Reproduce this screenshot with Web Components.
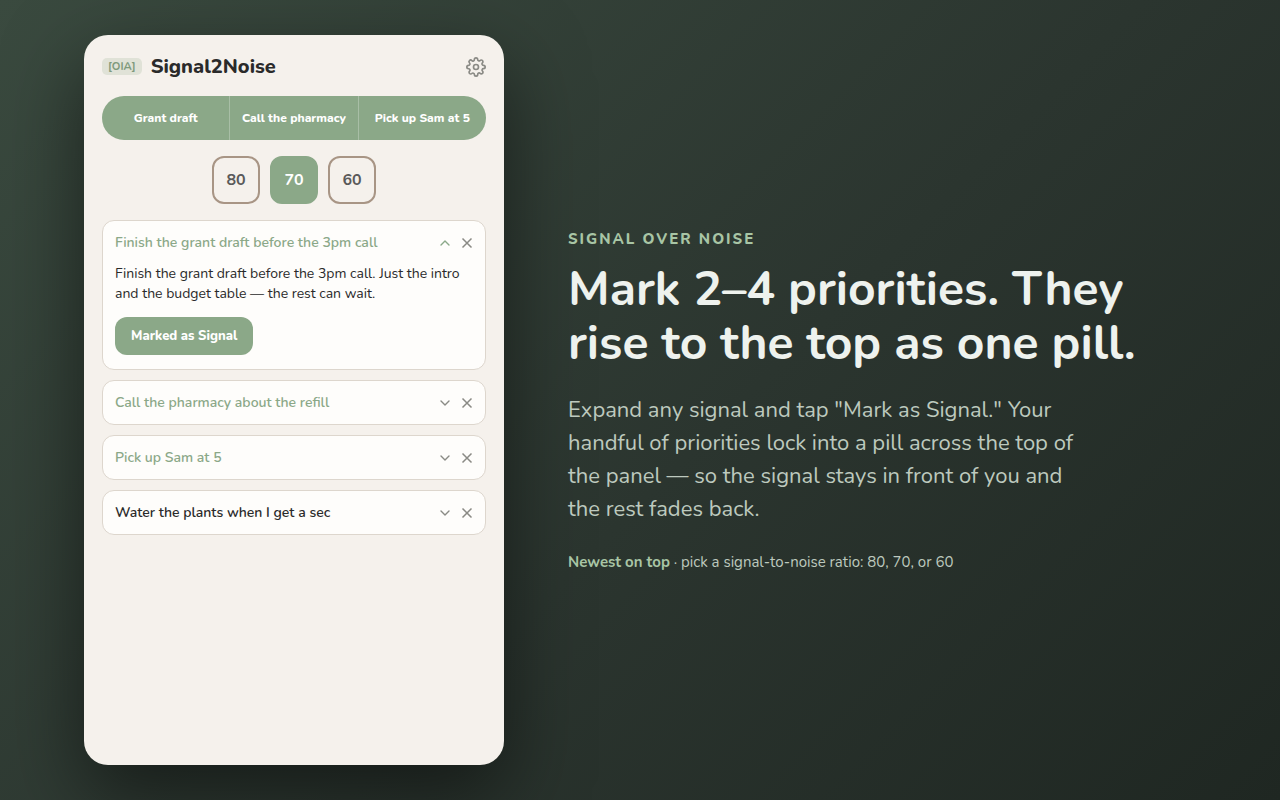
<!DOCTYPE html>
<html lang="en">
<head>
<meta charset="utf-8">
<meta name="viewport" content="width=device-width, initial-scale=1">
<title>Signal2Noise</title>
<style>
  :root {
    --sage: #8ba888;
    --sage-light: #a8c5a5;
    --cream: #f5f1ec;
    --card: #fefdfb;
    --line: #ddd6cd;
    --taupe: #a89585;
    --ink: #2a2a2a;
    --muted: #8a8a85;
  }
  html, body { margin: 0; }
  body { font-family: Nunito, "Nunito Sans", "Open Sans", sans-serif; color: var(--ink); }
</style>
</head>
<body>
<promo-page>
  <signal-panel slot="panel">
    <panel-header slot="header" tag="[OIA]">Signal2Noise</panel-header>
    <priority-pill>
      <span>Grant draft</span><span>Call the pharmacy</span><span>Pick up Sam at 5</span>
    </priority-pill>
    <ratio-picker values="80 70 60" selected="70"></ratio-picker>
    <signal-list>
      <signal-card heading="Finish the grant draft before the 3pm call" marked open>Finish the grant draft before the 3pm call. Just the intro and the budget table — the rest can wait.</signal-card>
      <signal-card heading="Call the pharmacy about the refill" marked></signal-card>
      <signal-card heading="Pick up Sam at 5" marked></signal-card>
      <signal-card heading="Water the plants when I get a sec"></signal-card>
    </signal-list>
  </signal-panel>
  <promo-copy slot="copy">
    <span slot="eyebrow">Signal over noise</span>
    <span slot="headline">Mark 2–4 priorities. They rise to the top as one pill.</span>
    <span slot="lead">Expand any signal and tap "Mark as Signal." Your handful of priorities lock into a pill across the top of the panel — so the signal stays in front of you and the rest fades back.</span>
    <strong slot="note-lead">Newest on top</strong>
    <span slot="note">· pick a signal-to-noise ratio: 80, 70, or 60</span>
  </promo-copy>
</promo-page>

<script>
  class BaseElement extends HTMLElement {
    constructor() {
      super();
      this.attachShadow({ mode: 'open' });
    }
    connectedCallback() {
      this.shadowRoot.innerHTML = this.render();
    }
  }

  customElements.define('promo-page', class extends BaseElement {
    render() {
      return `<style>
        :host {
          display: block;
          background: linear-gradient(135deg, #3a4a3f 0%, #2b352f 55%, #1f2722 100%);
        }
        main {
          box-sizing: border-box;
          min-height: 100vh;
          max-width: 1112px;
          margin: 0 auto;
          padding: 35px 0;
          display: grid;
          grid-template-columns: 420px minmax(0, 1fr);
          gap: 64px;
          align-items: center;
        }
        slot[name=panel] { display: contents; }
        ::slotted([slot=panel]) { align-self: stretch; }
        @media (max-width: 1000px) {
          main { grid-template-columns: minmax(0, 420px); justify-content: center; padding: 24px; }
        }
      </style>
      <main><slot name="panel"></slot><slot name="copy"></slot></main>`;
    }
  });

  customElements.define('signal-panel', class extends BaseElement {
    render() {
      return `<style>
        :host {
          box-sizing: border-box;
          display: flex;
          flex-direction: column;
          gap: 16px;
          padding: 18px;
          border-radius: 24px;
          background: var(--cream);
          box-shadow: 0 30px 80px rgba(0, 0, 0, .5);
        }
      </style>
      <slot name="header"></slot><slot></slot>`;
    }
  });

  customElements.define('panel-header', class extends BaseElement {
    render() {
      return `<style>
        :host { display: flex; align-items: center; gap: 9px; }
        .tag {
          padding: 1px 6px;
          border-radius: 5px;
          background: rgba(139, 168, 136, .2);
          color: #7f9a7c;
          font-size: 11px;
          line-height: 15px;
          font-weight: 700;
        }
        h1 { flex: 1; margin: 0; font-size: 20px; line-height: 27px; font-weight: 800; }
        button { display: flex; padding: 0; border: 0; background: none; color: var(--muted); cursor: pointer; }
      </style>
      <span class="tag">${this.getAttribute('tag')}</span>
      <h1><slot></slot></h1>
      <button type="button" aria-label="Settings">
        <svg width="20" height="20" viewBox="0 0 24 24" fill="none" stroke="currentColor" stroke-width="2" stroke-linecap="round" stroke-linejoin="round">
          <circle cx="12" cy="12" r="3"/>
          <path d="M19.4 15a1.65 1.65 0 0 0 .33 1.82l.06.06a2 2 0 1 1-2.83 2.83l-.06-.06a1.65 1.65 0 0 0-1.82-.33 1.65 1.65 0 0 0-1 1.51V21a2 2 0 0 1-4 0v-.09A1.65 1.65 0 0 0 9 19.4a1.65 1.65 0 0 0-1.82.33l-.06.06a2 2 0 1 1-2.83-2.83l.06-.06a1.65 1.65 0 0 0 .33-1.82 1.65 1.65 0 0 0-1.51-1H3a2 2 0 0 1 0-4h.09A1.65 1.65 0 0 0 4.6 9a1.65 1.65 0 0 0-.33-1.82l-.06-.06a2 2 0 1 1 2.83-2.83l.06.06a1.65 1.65 0 0 0 1.82.33H9a1.65 1.65 0 0 0 1-1.51V3a2 2 0 0 1 4 0v.09a1.65 1.65 0 0 0 1 1.51 1.65 1.65 0 0 0 1.82-.33l.06-.06a2 2 0 1 1 2.83 2.83l-.06.06a1.65 1.65 0 0 0-.33 1.82V9a1.65 1.65 0 0 0 1.51 1H21a2 2 0 0 1 0 4h-.09a1.65 1.65 0 0 0-1.51 1z"/>
        </svg>
      </button>`;
    }
  });

  customElements.define('priority-pill', class extends BaseElement {
    render() {
      return `<style>
        :host {
          display: flex;
          overflow: hidden;
          border-radius: 22px;
          background: var(--sage);
          color: #fff;
          font-size: 12px;
          line-height: 16px;
          font-weight: 800;
        }
        ::slotted(span) {
          flex: 1 1 0;
          padding: 14px 8px;
          text-align: center;
          white-space: nowrap;
        }
        ::slotted(span:not(:last-child)) { border-right: 1px solid rgba(255, 255, 255, .25); }
      </style><slot></slot>`;
    }
  });

  customElements.define('ratio-picker', class extends BaseElement {
    render() {
      const selected = this.getAttribute('selected');
      const buttons = this.getAttribute('values').split(' ').map(v =>
        `<button type="button" aria-pressed="${v === selected}">${v}</button>`).join('');
      return `<style>
        :host { display: flex; justify-content: center; gap: 10px; }
        button {
          width: 48px;
          height: 48px;
          padding: 0;
          border: 2px solid var(--taupe);
          border-radius: 12px;
          background: transparent;
          color: #5a5a5a;
          font: 700 16px/22px Nunito, "Nunito Sans", sans-serif;
          cursor: pointer;
        }
        button[aria-pressed=true] { border-color: var(--sage); background: var(--sage); color: #fff; }
      </style>${buttons}`;
    }
  });

  customElements.define('signal-list', class extends BaseElement {
    render() {
      return `<style>:host { display: flex; flex-direction: column; gap: 10px; }</style><slot></slot>`;
    }
  });

  customElements.define('signal-card', class extends BaseElement {
    render() {
      const open = this.hasAttribute('open');
      const chevron = open ? 'M2 8l4-4 4 4' : 'M2 4l4 4 4-4';
      return `<style>
        :host {
          display: block;
          padding: 12px;
          border: 1px solid var(--line);
          border-radius: 12px;
          background: var(--card);
        }
        :host([open]) { padding-bottom: 14px; }
        header { display: flex; align-items: center; gap: 10px; }
        h2 { flex: 1; margin: 0; font-size: 14px; line-height: 19px; font-weight: 600; }
        :host([marked]) h2 { color: var(--sage); }
        button { cursor: pointer; }
        .icon { display: flex; padding: 0; border: 0; background: none; color: var(--muted); }
        :host([open]) .toggle { color: var(--sage); }
        p { margin: 12px 0 13px; font-size: 14px; line-height: 20px; }
        .mark {
          padding: 10px 16px;
          border: 0;
          border-radius: 12px;
          background: var(--sage);
          color: #fff;
          font: 800 13px/18px Nunito, "Nunito Sans", sans-serif;
          display: block;
        }
      </style>
      <header>
        <h2>${this.getAttribute('heading')}</h2>
        <button type="button" class="icon toggle" aria-expanded="${open}" aria-label="${open ? 'Collapse' : 'Expand'}">
          <svg width="12" height="12" viewBox="0 0 12 12" fill="none" stroke="currentColor" stroke-width="1.4" stroke-linecap="round" stroke-linejoin="round"><path d="${chevron}"/></svg>
        </button>
        <button type="button" class="icon" aria-label="Dismiss">
          <svg width="12" height="12" viewBox="0 0 12 12" fill="none" stroke="currentColor" stroke-width="1.5"><path d="M1.5 1.5l9 9M10.5 1.5l-9 9"/></svg>
        </button>
      </header>
      ${open ? `<p><slot></slot></p><button type="button" class="mark">Marked as Signal</button>` : ''}`;
    }
  });

  customElements.define('promo-copy', class extends BaseElement {
    render() {
      return `<style>
        :host { display: block; color: #bdc9be; }
        .eyebrow {
          margin: 0 0 13px;
          color: var(--sage-light);
          font-size: 15px;
          line-height: 20px;
          font-weight: 800;
          letter-spacing: 2px;
          text-transform: uppercase;
        }
        h2 { margin: 0 0 24px; color: #eef2ee; font-size: 48px; line-height: 54px; font-weight: 700; }
        .lead { max-width: 520px; margin: 0 0 26px; font-size: 22px; line-height: 33px; }
        .note { margin: 0; font-size: 15px; line-height: 20px; }
        ::slotted(strong) { color: var(--sage-light); font-weight: 700; }
      </style>
      <p class="eyebrow"><slot name="eyebrow"></slot></p>
      <h2><slot name="headline"></slot></h2>
      <p class="lead"><slot name="lead"></slot></p>
      <p class="note"><slot name="note-lead"></slot> <slot name="note"></slot></p>`;
    }
  });
</script>
</body>
</html>
